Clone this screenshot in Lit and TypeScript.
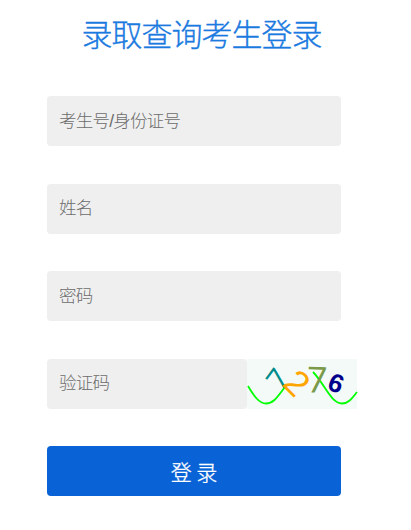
import { css, html, LitElement, svg } from "lit";
import { customElement, property } from "lit/decorators.js";

interface Glyph {
  char: string;
  kind: string;
  x: number;
  y: number;
  angle: number;
}

@customElement("captcha-image")
export class CaptchaImage extends LitElement {
  static styles = css`
    :host {
      display: block;
      width: 110px;
      height: 50px;
      background: #f4faf7;
      cursor: pointer;
    }

    svg {
      display: block;
      overflow: visible;
    }

    .wave {
      fill: none;
      stroke: #00ff00;
      stroke-width: 1.8;
    }

    text {
      text-anchor: middle;
      dominant-baseline: alphabetic;
    }

    .teal {
      font: 29px "Open Sans", sans-serif;
      fill: #008b8b;
    }

    .orange {
      font: 36px "Liberation Sans", sans-serif;
      fill: #ffa500;
    }

    .olive {
      font: 36px "Open Sans", sans-serif;
      fill: #7a9a4a;
    }

    .navy {
      font: bold 26px "Liberation Sans", sans-serif;
      fill: #00008b;
    }
  `;

  @property({ attribute: false })
  glyphs: Glyph[] = [];

  render() {
    return html`
      <svg width="110" height="50" viewBox="0 0 110 50">
        <path
          class="wave"
          d="M1 27 C7 37 12 44.5 19 44.5 C27 44.5 31 37 38 28 M66 13 C77 24 84 44.5 95 44.5 C102 44.5 106 38 110 33"
        />
        ${this.glyphs.map(
          (g) => svg`
            <g transform="translate(${g.x} ${g.y}) rotate(${g.angle})">
              <text class=${g.kind} y="0.35em">${g.char}</text>
            </g>
          `
        )}
      </svg>
    `;
  }
}

@customElement("app-root")
export class AppRoot extends LitElement {
  static styles = css`
    :host {
      display: block;
      height: 530px;
      overflow: hidden;
      background: #ffffff;
      font-family: "Liberation Sans", "Noto Sans CJK SC", sans-serif;
    }

    h1 {
      margin: 0;
      padding-top: 11px;
      width: 403px;
      height: 84px;
      box-sizing: border-box;
      line-height: 44px;
      font-family: "Noto Sans CJK SC", sans-serif;
      font-size: 31px;
      letter-spacing: -1px;
      font-weight: 300;
      -webkit-text-stroke: 0.35px #1b7ae0;
      text-align: center;
      color: #1b7ae0;
    }

    form {
      display: flex;
      flex-direction: column;
      gap: 37.5px;
      margin-left: 47px;
      padding-top: 12px;
      width: 310px;
    }

    .row {
      display: flex;
    }

    input {
      box-sizing: border-box;
      width: 294px;
      height: 50px;
      padding: 0 12px;
      border: 0;
      border-radius: 4px;
      outline: none;
      background: #efefef;
      font-family: "Liberation Sans", "Noto Sans CJK SC", sans-serif;
      font-size: 17.5px;
      font-weight: 300;
      letter-spacing: -0.75px;
    }

    input::placeholder {
      color: #6c6c6c;
    }

    .short {
      width: 200px;
    }

    button {
      width: 294px;
      height: 50px;
      padding: 0;
      border: 0;
      border-radius: 4px;
      background: #0a63d6;
      color: #ffffff;
      font-family: "Noto Sans CJK SC", sans-serif;
      font-size: 21px;
      font-weight: 300;
      -webkit-text-stroke: 0.3px #ffffff;
      cursor: pointer;
    }
  `;

  glyphs: Glyph[] = [
    { char: "7", kind: "teal", x: 31, y: 20, angle: -54 },
    { char: "2", kind: "orange", x: 50, y: 24, angle: 45 },
    { char: "7", kind: "olive", x: 70, y: 21, angle: 2 },
    { char: "6", kind: "navy", x: 89, y: 24, angle: 22 },
  ];

  handleSubmit(e: Event) {
    e.preventDefault();
  }

  render() {
    return html`
      <h1>录取查询考生登录</h1>
      <form @submit=${this.handleSubmit}>
        <div class="row"><input placeholder="考生号/身份证号" /></div>
        <div class="row"><input placeholder="姓名" /></div>
        <div class="row"><input type="password" placeholder="密码" /></div>
        <div class="row">
          <input class="short" placeholder="验证码" />
          <captcha-image .glyphs=${this.glyphs}></captcha-image>
        </div>
        <button>登 录</button>
      </form>
    `;
  }
}
